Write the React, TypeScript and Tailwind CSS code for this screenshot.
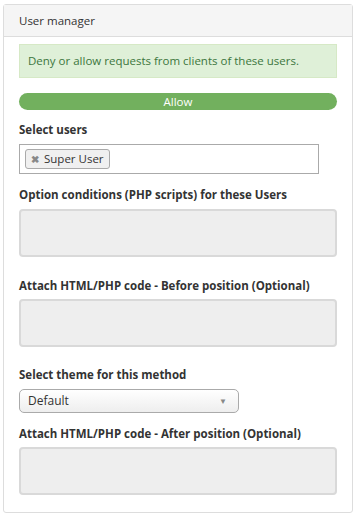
const font = { fontFamily: '"Open Sans", "Liberation Sans", sans-serif' }

function Label({ children }: { children: React.ReactNode }) {
  return <div className="text-[11.5px] font-bold text-[#333] leading-[14px]">{children}</div>
}

function Area() {
  return (
    <div className="h-[48px] w-[318px] rounded-[4px] border-2 border-[#d9d9d9] bg-[#eeeeee]" />
  )
}

export default function App() {
  return (
    <div className="h-[516px] w-[358px] bg-white pl-[3px] pt-[4px]" style={font}>
      <div className="w-[350px] h-[509px] rounded-[3px] border border-[#dddddd]">
        <div className="h-[32px] flex items-center px-[15px] bg-[#f5f5f5] border-b border-[#dddddd] text-[11.5px] text-[#333]">
          User manager
        </div>
        <div className="px-[15px] pt-[7px]">
          <div className="h-[34px] flex items-center px-[8px] bg-[#dff0d8] border border-[#d6e9c6] text-[11.5px] text-[#3c763d]">
            Deny or allow requests from clients of these users.
          </div>
          <div className="mt-[15px] h-[17px] rounded-full bg-[#72b05e] flex items-center justify-center text-[11.5px] text-white">
            Allow
          </div>
          <div className="mt-[13px]"><Label>Select users</Label></div>
          <div className="mt-[7px] w-[300px] h-[30px] border border-[#aaaaaa] bg-white flex items-center px-[5px]">
            <span className="flex items-center gap-[5px] h-[20px] px-[5px] rounded-[3px] border border-[#aaaaaa] bg-[#f0f0f0] text-[11.5px] text-[#333]">
              <span className="text-[#888] text-[10px] font-bold">✖</span>
              Super User
            </span>
          </div>
          <div className="mt-[14px]"><Label>Option conditions (PHP scripts) for these Users</Label></div>
          <div className="mt-[7px]"><Area /></div>
          <div className="mt-[22px]"><Label>Attach HTML/PHP code - Before position (Optional)</Label></div>
          <div className="mt-[6px]"><Area /></div>
          <div className="mt-[21px]"><Label>Select theme for this method</Label></div>
          <div className="mt-[7px] w-[220px] h-[24px] rounded-[5px] border border-[#aaaaaa] bg-gradient-to-b from-white to-[#eeeeee] flex items-center justify-between px-[8px] text-[12px] text-[#333]">
            <span>Default</span>
            <span className="text-[8px] text-[#888] mr-[3px]">▼</span>
          </div>
          <div className="mt-[14px]"><Label>Attach HTML/PHP code - After position (Optional)</Label></div>
          <div className="mt-[6px]"><Area /></div>
        </div>
      </div>
    </div>
  )
}
